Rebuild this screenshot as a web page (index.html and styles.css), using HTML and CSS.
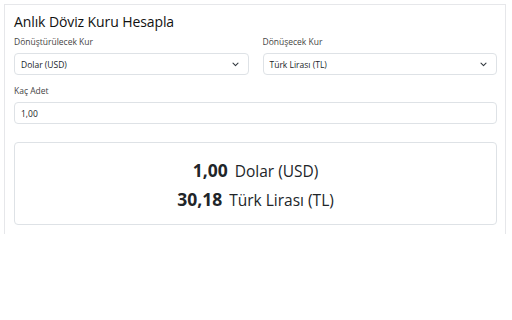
FILE: index.html
```html
<!DOCTYPE html>
<html lang="tr">
<head>
<meta charset="utf-8">
<title>Anlık Döviz Kuru Hesapla</title>
<link rel="stylesheet" href="styles.css">
</head>
<body>
<div class="frame">
  <h1 class="title">Anlık Döviz Kuru Hesapla</h1>
  <div class="row">
    <div class="field">
      <label class="label">Dönüştürülecek Kur</label>
      <div class="select"><span>Dolar (USD)</span>
        <svg class="chev" width="7" height="5" viewBox="0 0 7 5"><path d="M1 1.2 L3.5 3.6 L6 1.2" fill="none" stroke="#343a40" stroke-width="1.1" stroke-linecap="round" stroke-linejoin="round"/></svg>
      </div>
    </div>
    <div class="field">
      <label class="label">Dönüşecek Kur</label>
      <div class="select"><span>Türk Lirası (TL)</span>
        <svg class="chev" width="7" height="5" viewBox="0 0 7 5"><path d="M1 1.2 L3.5 3.6 L6 1.2" fill="none" stroke="#343a40" stroke-width="1.1" stroke-linecap="round" stroke-linejoin="round"/></svg>
      </div>
    </div>
  </div>
  <div class="field single">
    <label class="label">Kaç Adet</label>
    <div class="input">1,00</div>
  </div>
  <div class="result">
    <div class="line"><b>1,00</b> Dolar (USD)</div>
    <div class="line"><b>30,18</b> Türk Lirası (TL)</div>
  </div>
</div>
</body>
</html>
```
FILE: styles.css
```css
html, body { margin: 0; padding: 0; background: #fff; }
body { font-family: "Open Sans", "Noto Sans", sans-serif; color: #212529; }
.frame {
  margin: 4px 6px 0 4px;
  height: 230px;
  border: 1px solid #e6e7ea;
  border-bottom: none;
  padding: 6px 8px 0 9px;
  box-sizing: border-box;
}
.title { font-size: 14px; font-weight: 500; margin: 0 0 3px 0; line-height: 22px; letter-spacing: -0.1px; color: #111; }
.row { display: grid; grid-template-columns: 1fr 1fr; column-gap: 14px; }
.field { display: flex; flex-direction: column; }
.label { font-size: 8.5px; color: #444; line-height: 12px; margin-bottom: 5px; }
.select, .input {
  height: 22px; box-sizing: border-box; border: 1px solid #dee2e6; border-radius: 4px;
  font-size: 8.5px; display: flex; align-items: center; padding: 0 9px 0 6px; color: #212529;
}
.select { justify-content: space-between; }
.single { margin-top: 10px; }
.result {
  margin-top: 18px; height: 83px; box-sizing: border-box; border: 1px solid #dee2e6; border-radius: 4px;
  display: flex; flex-direction: column; justify-content: center; align-items: center; padding-top: 2px;
}
.line { font-size: 15.5px; line-height: 28px; }
.line b { font-size: 17.5px; font-weight: 700; margin-right: 3px; }
```
